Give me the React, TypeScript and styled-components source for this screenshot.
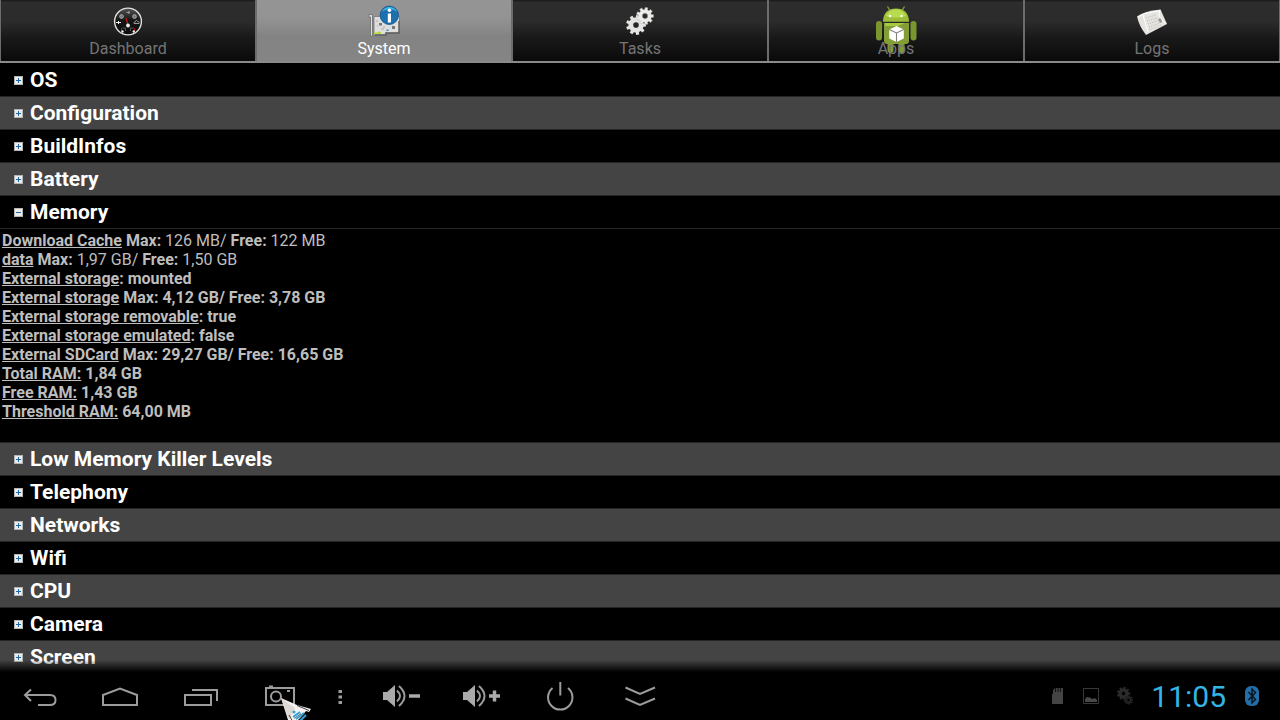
import React, { useState } from 'react';
import styled, { createGlobalStyle } from 'styled-components';

const GlobalStyle = createGlobalStyle`
  * { box-sizing: border-box; }
  body {
    margin: 0;
    background: #000;
    color: #fff;
    font-family: Roboto, "Liberation Sans", sans-serif;
  }
  button {
    font: inherit;
    color: inherit;
    background: none;
    border: 0;
    padding: 0;
    cursor: pointer;
  }
`;

const Screen = styled.div`
  display: flex;
  flex-direction: column;
  height: 100vh;
  overflow: hidden;
`;

const TabBar = styled.nav`
  display: flex;
  flex: none;
  height: 63px;
  margin-bottom: 1px;
  border-bottom: 2px solid #8a8a8a;
`;

const Tab = styled.button<{ $active: boolean }>`
  display: flex;
  flex: 1;
  flex-direction: column;
  align-items: center;
  gap: 1px;
  padding-top: 6px;
  border: solid #6c6c6c;
  border-width: 0 1px;
  color: ${(p) => (p.$active ? '#fff' : '#757575')};
  background: ${(p) =>
    p.$active
      ? 'linear-gradient(#959595, #939393 30%, #838383 60%, #858585)'
      : 'linear-gradient(#181818, #2d2d2d 4%, #2b2b2b 35%, #1a1a1a 60%, #0a0a0a)'};
`;

const TabIcon = styled.svg`
  flex: none;
  width: 32px;
  height: 32px;
  overflow: visible;
`;

const TabLabel = styled.span`
  position: relative;
  font-size: 16px;
  line-height: 19px;
`;

const List = styled.main`
  flex: 1;
  min-height: 0;
  overflow: hidden;
`;

const RowHeading = styled.h2`
  margin: 0;
  font-size: 21px;
  font-weight: 700;
`;

const RowButton = styled.button<{ $shaded: boolean }>`
  display: flex;
  align-items: center;
  gap: 7px;
  width: 100%;
  height: 33px;
  padding-left: 14px;
  border-bottom: 1px solid #262626;
  line-height: 32px;
  background: ${(p) => (p.$shaded ? '#444' : '#000')};
`;

const ToggleIcon = styled.svg`
  flex: none;
  width: 9px;
  height: 9px;
`;

const Details = styled.div`
  padding: 2px 2px 21px;
  border-bottom: 1px solid #262626;
  color: #bebebe;
  font-size: 16px;
  line-height: 19px;
`;

const Line = styled.p<{ $bold: boolean }>`
  margin: 0;
  font-weight: ${(p) => (p.$bold ? 700 : 400)};
`;

const NavBar = styled.footer`
  position: relative;
  display: flex;
  flex: none;
  align-items: center;
  justify-content: space-between;
  height: 48px;
  background: #000;

  &::before {
    content: '';
    position: absolute;
    right: 0;
    bottom: 100%;
    left: 0;
    height: 12px;
    background: linear-gradient(transparent, #000);
    pointer-events: none;
  }
`;

const NavGroup = styled.div`
  display: flex;
`;

const NavButton = styled.button<{ $narrow?: boolean }>`
  position: relative;
  display: flex;
  align-items: center;
  justify-content: center;
  width: ${(p) => (p.$narrow ? 40 : 80)}px;
  height: 48px;
`;

const NavIcon = styled.svg`
  width: 40px;
  height: 32px;
  fill: none;
  stroke: #9c9c9c;
  stroke-width: 2;
`;

const Pointer = styled.svg`
  position: absolute;
  top: 24px;
  left: 40px;
  width: 34px;
  height: 34px;
  pointer-events: none;
`;

const Status = styled.div`
  display: flex;
  align-items: center;
  gap: 18px;
  padding-right: 20px;
`;

const StatusIcons = styled.div`
  display: flex;
  align-items: center;
  gap: 18px;
`;

const StatusIcon = styled.svg`
  width: 16px;
  height: 20px;
`;

const Clock = styled.time`
  padding-top: 2px;
  color: #33b5e5;
  font-size: 30px;
  line-height: 46px;
`;

const gearPath = (cx: number, cy: number, r: number, hole: number, teeth = 9) => {
  const points: string[] = [];
  const step = (Math.PI * 2) / teeth;
  for (let i = 0; i < teeth; i += 1) {
    [[-0.32, 0.76], [-0.22, 1], [0.22, 1], [0.32, 0.76]].forEach(([a, k]) => {
      const angle = (i + a) * step;
      points.push(`${(cx + Math.cos(angle) * r * k).toFixed(2)} ${(cy + Math.sin(angle) * r * k).toFixed(2)}`);
    });
  }
  return `M${points.join('L')}ZM${cx - hole} ${cy}a${hole} ${hole} 0 1 0 ${hole * 2} 0a${hole} ${hole} 0 1 0 ${-hole * 2} 0Z`;
};

const DashboardIcon = () => (
  <TabIcon viewBox="0 0 32 32" aria-hidden="true">
    <defs>
      <linearGradient id="dial" x2="0" y2="1">
        <stop stopColor="#555" />
        <stop offset=".45" stopColor="#161616" />
        <stop offset="1" stopColor="#0c0c0c" />
      </linearGradient>
    </defs>
    <circle cx="16" cy="15.5" r="13.4" fill="url(#dial)" stroke="#e2e2e2" strokeWidth="1.4" />
    <g fill="#777" stroke="#b5b5b5" strokeWidth=".8">
      <circle cx="9.5" cy="10.5" r="1.9" />
      <circle cx="22.5" cy="10.5" r="1.9" />
      <path d="M14.5 6.5h3M17 5v3" />
    </g>
    <path d="M4 16.5h5M6.5 15v3" stroke="#eee" />
    <path d="M22 17.5h5c1-2-1-2-1.5-2-1-2-2-1-2 .3-1 0-2 .7-1.5 1.7z" fill="none" stroke="#bbb" strokeWidth=".8" />
    <path d="M14 12l2 7" stroke="#c3171c" strokeWidth="1.2" />
    <path d="M9.5 22v3M22.5 22v3" stroke="#b01216" />
    <path d="M10.5 22h3v3M21.5 22h-3v3" fill="none" stroke="#555" />
    <circle cx="16" cy="19.5" r="1.9" fill="#eee" />
    <circle cx="10.5" cy="25.5" r="1.2" fill="#eee" />
    <circle cx="21.8" cy="25.5" r="1.2" fill="#eee" />
  </TabIcon>
);

const SystemIcon = () => (
  <TabIcon viewBox="0 0 32 32" aria-hidden="true">
    <path d="M6 10.5h25.5V27h-14v2H6z" fill="#dedede" stroke="#777" strokeWidth=".8" />
    <path d="M31 15v12H18v2H7" fill="none" stroke="#606060" strokeWidth="1.5" />
    <path d="M1 8.5h3.5V30H2.500V11H1z" fill="#ddd" stroke="#6d6d6d" strokeWidth=".8" />
    <path d="M6 28v-1.5h3l1-1 3 .5v2z" fill="#b8dc45" />
    <path d="M9 14v2M9 20h1M13 23h3M16 20v2" stroke="#aaa" />
    <path d="M11 17h3v2.500h-3zM24 20h3v3h-3z" fill="#777" />
    <path d="M18.5 23.5h2V25h-2z" fill="#2789c6" />
    <circle cx="21.3" cy="9.3" r="9.2" fill="#1c70ae" stroke="#15578b" strokeWidth=".8" />
    <path d="M14 5.5a8.500 8.500 0 0 1 15 0Q21.500 1 14 5.500z" fill="#40b4e5" />
    <circle cx="21.4" cy="4.2" r="1.8" fill="#fff" />
    <path d="M19.8 7.500h3.200v9h-3.200z" fill="#fff" />
  </TabIcon>
);

const TasksIcon = () => (
  <TabIcon viewBox="0 0 32 32" aria-hidden="true">
    <path d={gearPath(12, 19, 10, 2.8)} fill="#e4e4e2" fillRule="evenodd" />
    <path d={gearPath(21, 10, 8.6, 2.7)} fill="#ececea" stroke="#a8a8a8" strokeWidth=".4" fillRule="evenodd" />
  </TabIcon>
);

const AppsIcon = () => (
  <TabIcon viewBox="0 0 32 32" aria-hidden="true">
    <path d="M7.5 .5l3 5M24.5 .5l-3 5" stroke="#8ea936" strokeWidth="1.2" />
    <path d="M3 15.8C3 7 8 2.500 16 2.500s13 4.500 13 13.300z" fill="#9dbe3b" />
    <path d="M6 10C8 5 12 3.500 16 3.500s8 1.500 10 6.500q-10 3-20 0z" fill="#b7dc50" />
    <circle cx="10" cy="10" r="1.2" fill="#fff" />
    <circle cx="21.5" cy="10" r="1.2" fill="#fff" />
    <rect x="7.5" y="30" width="6" height="17" rx="3" fill="#809c32" />
    <rect x="18.5" y="30" width="6" height="17" rx="3" fill="#809c32" />
    <path d="M4 17h25v18q0 3-3 3H7q-3 0-3-3z" fill="#829e35" />
    <path d="M5 17h20l-7 3H5z" fill="#a8ca43" />
    <rect x="-4" y="15" width="6" height="19.5" rx="3" fill="#7b952f" />
    <rect x="30.5" y="15" width="6" height="19.5" rx="3" fill="#7b952f" />
    <path d="M16.5 20l7.300 3.500v9L16.500 36l-7.300-3.500v-9z" fill="#fff" />
    <path d="M9.2 23.500l7.300 3.500 7.300-3.500M16.500 27v9" fill="none" stroke="#808080" strokeWidth="1.1" />
  </TabIcon>
);

const LogsIcon = () => (
  <TabIcon viewBox="0 0 32 32" aria-hidden="true">
    <path d="M1 10.5Q8 5 24.500 3.500L31 18 10 29Q3 20 1 10.500z" fill="#e5e4e0" />
    <path d="M2 11Q10 6 24 5M7 9l5 17" fill="none" stroke="#fff" />
    <path d="M10 12l10-3M11 15l10-3M12 18l12-4M13 21l11-4M13 24l12-5" stroke="#b9b8b4" strokeDasharray="1 1" />
    <path d="M22 13l3-1 1 4-2 1z" fill="#999" />
    <path d="M24 4l-1 6 7 8" fill="none" stroke="#fff" />
  </TabIcon>
);

const tabs = [
  { name: 'Dashboard', Icon: DashboardIcon },
  { name: 'System', Icon: SystemIcon },
  { name: 'Tasks', Icon: TasksIcon },
  { name: 'Apps', Icon: AppsIcon },
  { name: 'Logs', Icon: LogsIcon },
];

const MemoryDetails = () => (
  <Details>
    <Line $bold={false}><b><u>Download Cache</u> Max:</b> 126 MB/ <b>Free:</b> 122 MB</Line>
    <Line $bold={false}><b><u>data</u> Max:</b> 1,97 GB/ <b>Free:</b> 1,50 GB</Line>
    <Line $bold><u>External storage</u>: mounted</Line>
    <Line $bold><u>External storage</u> Max: 4,12 GB/ Free: 3,78 GB</Line>
    <Line $bold><u>External storage removable</u>: true</Line>
    <Line $bold><u>External storage emulated</u>: false</Line>
    <Line $bold><u>External SDCard</u> Max: 29,27 GB/ Free: 16,65 GB</Line>
    <Line $bold><u>Total RAM:</u> 1,84 GB</Line>
    <Line $bold><u>Free RAM:</u> 1,43 GB</Line>
    <Line $bold><u>Threshold RAM:</u> 64,00 MB</Line>
  </Details>
);

const sections = [
  { name: 'OS', shaded: false },
  { name: 'Configuration', shaded: true },
  { name: 'BuildInfos', shaded: false },
  { name: 'Battery', shaded: true },
  { name: 'Memory', shaded: false },
  { name: 'Low Memory Killer Levels', shaded: true },
  { name: 'Telephony', shaded: false },
  { name: 'Networks', shaded: true },
  { name: 'Wifi', shaded: false },
  { name: 'CPU', shaded: true },
  { name: 'Camera', shaded: false },
  { name: 'Screen', shaded: true },
];

const Toggle = ({ open }: { open: boolean }) => (
  <ToggleIcon viewBox="0 0 9 9" aria-hidden="true">
    <rect width="9" height="9" fill="#b4b4b4" />
    <rect x="1" y="1" width="7" height="7" fill="#ececec" />
    <path d={open ? 'M2 4.5h5' : 'M2 4.5h5M4.5 2v5'} stroke="#1c68a8" />
  </ToggleIcon>
);

const Speaker = () => (
  <>
    <path d="M3 12h4l8-7v22l-8-7H3z" fill="#aaa" stroke="none" />
    <path d="M17 10.500q6 5.500 0 11" />
    <path d="M19 6q11 10 0 20" />
  </>
);

export default function App() {
  const [activeTab, setActiveTab] = useState('System');
  const [openSection, setOpenSection] = useState('Memory');

  return (
    <Screen>
      <GlobalStyle />
      <TabBar>
        {tabs.map(({ name, Icon }) => (
          <Tab key={name} $active={name === activeTab} onClick={() => setActiveTab(name)}>
            <Icon />
            <TabLabel>{name}</TabLabel>
          </Tab>
        ))}
      </TabBar>

      <List>
        {sections.map(({ name, shaded }) => {
          const open = name === openSection;
          return (
            <section key={name}>
              <RowHeading>
                <RowButton
                  $shaded={shaded}
                  aria-expanded={open}
                  onClick={() => setOpenSection(open ? '' : name)}
                >
                  <Toggle open={open} />
                  {name}
                </RowButton>
              </RowHeading>
              {open && name === 'Memory' && <MemoryDetails />}
            </section>
          );
        })}
      </List>

      <NavBar>
        <NavGroup>
          <NavButton aria-label="Back">
            <NavIcon viewBox="0 0 40 32">
              <path d="M11 9.500L5 15l6 6M5 15h25q5.500 0 5.500 5t-5.500 5H18" />
            </NavIcon>
          </NavButton>
          <NavButton aria-label="Home">
            <NavIcon viewBox="0 0 40 32">
              <path d="M3 25V15l17-6.500L37 15v10z" />
            </NavIcon>
          </NavButton>
          <NavButton aria-label="Recent apps">
            <NavIcon viewBox="0 0 40 32">
              <path d="M5 15h26v10H5zM12 10h25v11" />
            </NavIcon>
          </NavButton>
          <NavButton aria-label="Screenshot">
            <NavIcon viewBox="0 0 40 32">
              <path d="M6 8h28v17H6zM9 6.500h4M27 11h3" />
              <circle cx="16" cy="16.5" r="5" />
            </NavIcon>
            <Pointer viewBox="0 0 34 34" aria-hidden="true">
              <path d="M1 2l16 7 14 4-2 3-3-1-10 12H9z" fill="#f6f4f2" />
              <path d="M1 2l8 22 6-12z" fill="#ddd8d4" />
              <path d="M17 9.500l12 5M9 19l4 7" stroke="#3c3c3c" />
              <circle cx="14" cy="16" r="1.5" fill="#35a0d4" />
              <path d="M13 21l7-5M16 23l8-6M20 25l6-6" stroke="#35a0d4" strokeWidth="2" />
              <path d="M14 22.500l7-5M18 24l7-5.500" stroke="#23495c" strokeWidth=".7" />
            </Pointer>
          </NavButton>
          <NavButton $narrow aria-label="Menu">
            <NavIcon viewBox="0 0 40 32">
              <path d="M18.500 11.500h3.500M18.500 17h3.500M18.500 22.500h3.500" strokeWidth="3" />
            </NavIcon>
          </NavButton>
          <NavButton aria-label="Volume down">
            <NavIcon viewBox="0 0 40 32">
              <Speaker />
              <path d="M29 16h11" strokeWidth="3.5" stroke="#aaa" />
            </NavIcon>
          </NavButton>
          <NavButton aria-label="Volume up">
            <NavIcon viewBox="0 0 40 32">
              <Speaker />
              <path d="M29 16h11M34.500 10.500v11" strokeWidth="3.5" stroke="#aaa" />
            </NavIcon>
          </NavButton>
          <NavButton aria-label="Power">
            <NavIcon viewBox="0 0 40 32">
              <path d="M12.500 8a12.200 12.200 0 1 0 15.500 0M20.300 2v13.500" />
            </NavIcon>
          </NavButton>
          <NavButton aria-label="Hide bar">
            <NavIcon viewBox="0 0 40 32">
              <path d="M5.500 7.500L20 14l15-6.500M5.500 18.500L20 25l15-6.500" />
            </NavIcon>
          </NavButton>
        </NavGroup>

        <Status>
          <StatusIcons>
            <StatusIcon viewBox="0 0 16 20" aria-hidden="true">
              <path d="M4 4l2-2h8v16H3V8h1z" fill="#444" />
              <path d="M6.500 2v4M9 2v4M11.500 2v4" stroke="#111" />
            </StatusIcon>
            <StatusIcon viewBox="0 0 16 20" aria-hidden="true">
              <path d="M.5 2.500h15v15H.5z" fill="none" stroke="#393939" />
              <path d="M2 16v-3l2-2 3 .5 2 1.500 3-1 2 2v2z" fill="#484848" />
            </StatusIcon>
            <StatusIcon viewBox="0 0 16 20" aria-hidden="true">
              <path d={gearPath(6.5, 7.5, 6.8, 1.8)} fill="#2b2b2b" fillRule="evenodd" />
              <path d={gearPath(11.5, 14, 4.8, 1.2)} fill="#222" fillRule="evenodd" />
            </StatusIcon>
          </StatusIcons>
          <Clock dateTime="11:05">11:05</Clock>
          <StatusIcon viewBox="0 0 16 20" aria-label="Bluetooth" role="img">
            <rect x="1" width="14" height="20" rx="6" fill="#276da5" />
            <path d="M4.500 6l7 7.500L8 17V3l3.500 3.500-7 7.500" fill="none" stroke="#071621" strokeWidth="1.5" />
          </StatusIcon>
        </Status>
      </NavBar>
    </Screen>
  );
}
